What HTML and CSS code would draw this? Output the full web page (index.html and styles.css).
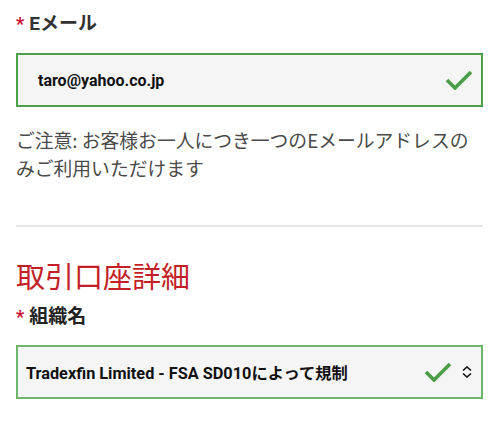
FILE: index.html
```html
<!DOCTYPE html>
<html lang="ja">
<head>
<meta charset="utf-8">
<link rel="stylesheet" href="styles.css">
</head>
<body>
<div class="page">
  <div class="field">
    <label class="label"><span class="req">*</span>Eメール</label>
    <div class="box email-box">
      <span class="value">taro@yahoo.co.jp</span>
      <svg class="check" width="28" height="20" viewBox="0 0 28 20"><path d="M2 10 L10 18 L26 2" fill="none" stroke="#4a9d47" stroke-width="3.6"/></svg>
    </div>
    <p class="note">ご注意: お客様お一人につき一つのEメールアドレスのみご利用いただけます</p>
  </div>
  <hr class="divider">
  <h2 class="section-title">取引口座詳細</h2>
  <div class="field">
    <label class="label label-org"><span class="req">*</span>組織名</label>
    <div class="box select-box">
      <span class="value select-value">Tradexfin Limited - FSA SD010によって規制</span>
      <svg class="check" width="28" height="20" viewBox="0 0 28 20"><path d="M2 10 L10 18 L26 2" fill="none" stroke="#4a9d47" stroke-width="3.6"/></svg>
      <svg class="updown" width="12" height="12" viewBox="0 0 12 12"><path d="M2 4.5 L6 1 L10 4.5 M2 7.5 L6 11 L10 7.5" fill="none" stroke="#111" stroke-width="1.6"/></svg>
    </div>
  </div>
</div>
</body>
</html>
```
FILE: styles.css
```css
html, body {
  margin: 0;
  padding: 0;
  background: #fff;
}
body {
  font-family: Roboto, "Noto Sans CJK JP", sans-serif;
  color: #333;
}
.page {
  padding: 10px 17px 0 16px;
}
.label {
  display: flex;
  align-items: center;
  font-size: 19px;
  font-weight: 700;
  color: #333;
  line-height: 28px;
}
.label-org {
  margin-top: 10px;
  color: #222;
}
.req {
  color: #c8102e;
  font-size: 18px;
  margin-right: 5px;
  font-weight: 700;
}
.box {
  box-sizing: border-box;
  height: 54px;
  margin-top: 15px;
  background: #f5f5f5;
  border: 2px solid #4aa046;
  display: flex;
  align-items: center;
}
.email-box {
  padding: 0 8px 0 20px;
}
.value {
  flex: 1;
  font-size: 16px;
  font-weight: 700;
  color: #111;
}
.note {
  margin: 19px 0 0;
  font-size: 18.8px;
  line-height: 28px;
  color: #4a4a4a;
  font-family: "Noto Sans CJK JP", sans-serif;
  font-weight: 400;
}
.divider {
  border: 0;
  border-top: 2px solid #e6e6e6;
  margin: 43px 0 0;
}
.section-title {
  margin: 30px 0 0;
  font-size: 29px;
  font-weight: 400;
  color: #c41f27;
  line-height: 36px;
  font-family: "Noto Sans CJK JP", sans-serif;
}
.select-box {
  margin-top: 14px;
  padding: 0 8px 0 8px;
  border-color: #6cb56a;
}
.select-value {
  font-size: 16.3px;
}
.updown {
  margin-left: 9px;
}
```
